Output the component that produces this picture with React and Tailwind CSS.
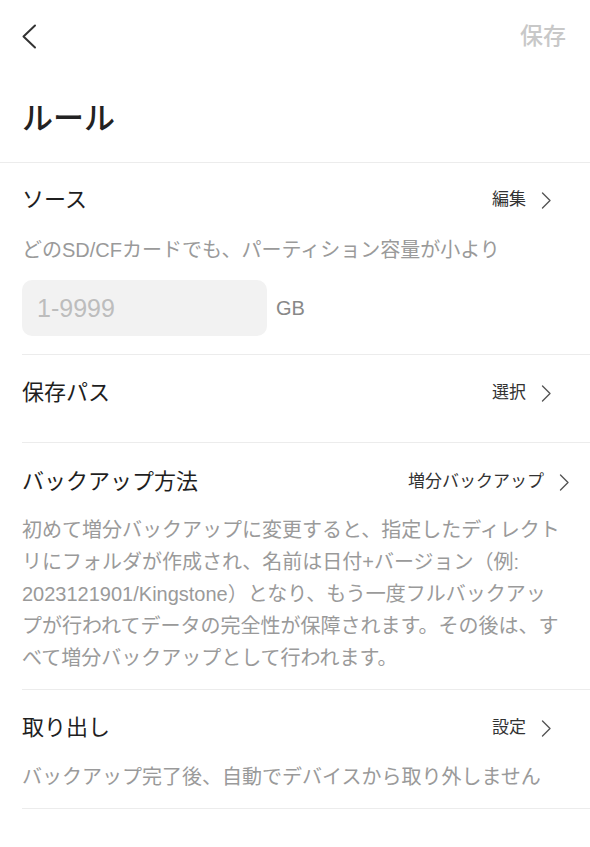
import { useState } from "react";

const font = "font-['Liberation_Sans','Noto_Sans_CJK_JP',sans-serif]";

function Chevron() {
  return (
    <svg width="10" height="17" viewBox="0 0 10 17" fill="none" className="shrink-0">
      <path d="M1.5 1 L9 8.5 L1.5 16" stroke="#555" strokeWidth="1.4" strokeLinecap="round" strokeLinejoin="round" />
    </svg>
  );
}

function RowHead({ title, action, wide }) {
  return (
    <div className={`flex items-center justify-between ${wide ? "pr-[21px]" : "pr-[39px]"}`}>
      <span className="text-[22px] leading-[28px] text-[#1f1f1f]">{title}</span>
      <div className="flex items-center gap-[15px]">
        <span className="text-[17px] leading-[24px] text-[#333]">{action}</span>
        <Chevron />
      </div>
    </div>
  );
}

export default function App() {
  const [size, setSize] = useState("");

  const lines = [
    "初めて増分バックアップに変更すると、指定したディレクト",
    "リにフォルダが作成され、名前は日付+バージョン（例:",
    "2023121901/Kingstone）となり、もう一度フルバックアッ",
    "プが行われてデータの完全性が保障されます。その後は、す",
    "べて増分バックアップとして行われます。",
  ];

  return (
    <div className={`min-h-[847px] w-full bg-white ${font}`}>
      {/* ヘッダー */}
      <div className="flex h-[72px] items-center justify-between pl-[21px] pr-[24px]">
        <svg width="16" height="25" viewBox="0 0 16 25" fill="none">
          <path d="M14 1.5 L2.5 12.5 L14 23.5" stroke="#333" strokeWidth="2" strokeLinecap="round" strokeLinejoin="round" />
        </svg>
        <span className="text-[23px] font-medium text-[#c8c8c8]">保存</span>
      </div>

      <div className="border-b border-[#ececec] px-[22px] pb-[28px] pt-[31px]">
        <h1 className="text-[31px] font-medium leading-[31px] text-[#222]">ルール</h1>
      </div>

      {/* ソース */}
      <div className="ml-[22px] border-b border-[#ececec] pb-[18px] pt-[23px]">
        <RowHead title="ソース" action="編集" />
        <p className="mt-[22px] text-[20px] leading-[28px] text-[#9a9a9a]">
          どのSD/CFカードでも、パーティション容量が小より
        </p>
        <div className="mt-[16px] flex items-center">
          <input
            value={size}
            onChange={(e) => setSize(e.target.value)}
            placeholder="1-9999"
            className="h-[56px] w-[245px] rounded-[10px] bg-[#f2f2f2] px-[15px] text-[25px] text-[#333] outline-none placeholder:text-[#bdbdbd]"
          />
          <span className="ml-[9px] text-[20px] text-[#888]">GB</span>
        </div>
      </div>

      {/* 保存パス */}
      <div className="ml-[22px] border-b border-[#ececec] pb-[35px] pt-[24px]">
        <RowHead title="保存パス" action="選択" />
      </div>

      {/* バックアップ方法 */}
      <div className="ml-[22px] border-b border-[#ececec] pb-[15px] pt-[25px]">
        <RowHead title="バックアップ方法" action="増分バックアップ" wide />
        <div className="mt-[18px] pr-[22px] text-[20px] leading-[32px] text-[#9a9a9a]">
          {lines.map((l) => (
            <div key={l} className="whitespace-nowrap">
              {l}
            </div>
          ))}
        </div>
      </div>

      {/* 取り出し */}
      <div className="ml-[22px] border-b border-[#ececec] pb-[17px] pt-[24px]">
        <RowHead title="取り出し" action="設定" />
        <p className="mt-[21px] text-[20px] leading-[28px] text-[#9a9a9a]">
          バックアップ完了後、自動でデバイスから取り外しません
        </p>
      </div>
    </div>
  );
}
